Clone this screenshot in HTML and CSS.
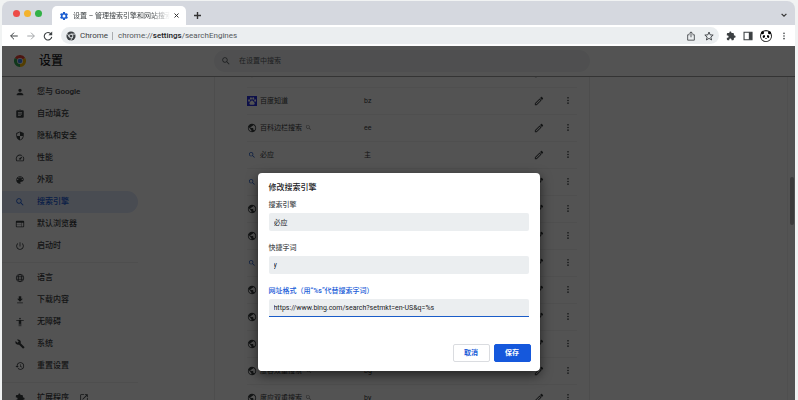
FILE: index.html
```html
<!DOCTYPE html>
<html lang="zh-CN">
<head>
<meta charset="utf-8">
<title>设置 - 管理搜索引擎和网站搜索</title>
<link rel="stylesheet" href="styles.css">
</head>
<body>
<svg class="sprite" aria-hidden="true">
  <symbol id="person" viewBox="0 0 24 24"><path d="M12 12c2.210 0 4-1.790 4-4s-1.790-4-4-4-4 1.790-4 4 1.790 4 4 4zm0 2c-2.670 0-8 1.340-8 4v2h16v-2c0-2.660-5.330-4-8-4z"/></symbol>
  <symbol id="assignment" viewBox="0 0 24 24"><path d="M19 3h-4.180C14.400 1.840 13.300 1 12 1s-2.400.84-2.820 2H5c-1.100 0-2 .9-2 2v14c0 1.100.9 2 2 2h14c1.100 0 2-.9 2-2V5c0-1.100-.9-2-2-2zm-7 0c.55 0 1 .45 1 1s-.45 1-1 1-1-.45-1-1 .45-1 1-1zm2 14H7v-2h7v2zm3-4H7v-2h10v2zm0-4H7V7h10v2z"/></symbol>
  <symbol id="shield" viewBox="0 0 24 24"><path d="M12 1L3 5v6c0 5.550 3.840 10.740 9 12 5.160-1.260 9-6.450 9-12V5l-9-4zm0 10.990h7c-.53 4.120-3.280 7.790-7 8.940V12H5V6.300l7-3.110v8.800z"/></symbol>
  <symbol id="speed" viewBox="0 0 24 24"><path d="M20.380 8.570l-1.230 1.850a8 8 0 0 1-.22 7.580H5.070A8 8 0 0 1 15.580 6.850l1.850-1.230A10 10 0 0 0 3.350 19a2 2 0 0 0 1.720 1h13.850a2 2 0 0 0 1.740-1 10 10 0 0 0-.27-10.440zm-9.790 6.840a2 2 0 0 0 2.830 0l5.660-8.490-8.490 5.660a2 2 0 0 0 0 2.830z"/></symbol>
  <symbol id="palette" viewBox="0 0 24 24"><path d="M12 3c-4.970 0-9 4.030-9 9s4.030 9 9 9c.83 0 1.500-.67 1.500-1.500 0-.39-.15-.74-.39-1.010-.23-.26-.38-.61-.38-.99 0-.83.67-1.500 1.500-1.500H16c2.760 0 5-2.240 5-5 0-4.420-4.030-8-9-8zm-5.500 9c-.83 0-1.500-.67-1.500-1.500S5.670 9 6.500 9 8 9.670 8 10.500 7.330 12 6.500 12zm3-4C8.670 8 8 7.330 8 6.500S8.670 5 9.500 5s1.500.67 1.500 1.500S10.330 8 9.500 8zm5 0c-.83 0-1.500-.67-1.500-1.500S13.670 5 14.500 5s1.500.67 1.500 1.500S15.330 8 14.500 8zm3 4c-.83 0-1.500-.67-1.500-1.500S16.670 9 17.500 9s1.500.67 1.500 1.500-.67 1.500-1.500 1.500z"/></symbol>
  <symbol id="search" viewBox="0 0 24 24"><path d="M15.500 14h-.79l-.28-.27C15.410 12.590 16 11.110 16 9.500 16 5.910 13.090 3 9.500 3S3 5.910 3 9.500 5.910 16 9.500 16c1.610 0 3.090-.59 4.230-1.570l.27.28v.79l5 4.990L20.490 19l-4.990-5zm-6 0C7.010 14 5 11.990 5 9.500S7.010 5 9.500 5 14 7.010 14 9.500 11.990 14 9.500 14z"/></symbol>
  <symbol id="browser" viewBox="0 0 24 24"><path d="M20 4H4c-1.100 0-2 .9-2 2v12c0 1.100.9 2 2 2h16c1.100 0 2-.9 2-2V6c0-1.100-.9-2-2-2zm-5 14H4v-4h11v4zm0-5H4V9h11v4zm5 5h-4V9h4v9z"/></symbol>
  <symbol id="power" viewBox="0 0 24 24"><path d="M13 3h-2v10h2V3zm4.830 2.170l-1.420 1.420C17.990 7.860 19 9.810 19 12c0 3.870-3.130 7-7 7s-7-3.130-7-7c0-2.190 1.010-4.140 2.580-5.420L6.170 5.170C4.230 6.820 3 9.260 3 12c0 4.970 4.030 9 9 9s9-4.030 9-9c0-2.740-1.230-5.180-3.170-6.830z"/></symbol>
  <symbol id="language" viewBox="0 0 24 24"><g fill="none" stroke="currentColor" stroke-width="2"><circle cx="12" cy="12" r="9"/><ellipse cx="12" cy="12" rx="4" ry="9"/><path d="M3.500 9h17M3.500 15h17"/></g></symbol>
  <symbol id="download" viewBox="0 0 24 24"><path d="M5 20h14v-2H5v2zM19 9h-4V3H9v6H5l7 7 7-7z"/></symbol>
  <symbol id="access" viewBox="0 0 24 24"><path d="M12 2c1.100 0 2 .9 2 2s-.9 2-2 2-2-.9-2-2 .9-2 2-2zm9 7h-6v13h-2v-6h-2v6H9V9H3V7h18v2z"/></symbol>
  <symbol id="build" viewBox="0 0 24 24"><path d="M22.700 19l-9.100-9.100c.9-2.300.4-5-1.500-6.900-2-2-5-2.400-7.400-1.300L9 6 6 9 1.600 4.700C.4 7.100.9 10.100 2.900 12.100c1.900 1.900 4.600 2.400 6.900 1.500l9.100 9.100c.4.4 1 .4 1.400 0l2.300-2.300c.5-.4.5-1.100.1-1.400z"/></symbol>
  <symbol id="restore" viewBox="0 0 24 24"><path d="M13 3c-4.970 0-9 4.030-9 9H1l3.890 3.890.07.14L9 12H6c0-3.870 3.130-7 7-7s7 3.130 7 7-3.130 7-7 7c-1.930 0-3.680-.79-4.940-2.060l-1.420 1.420C8.270 19.990 10.510 21 13 21c4.970 0 9-4.030 9-9s-4.030-9-9-9zm-1 5v5l4.280 2.540.72-1.210-3.500-2.080V8H12z"/></symbol>
  <symbol id="extension" viewBox="0 0 24 24"><path d="M20.500 11H19V7c0-1.100-.9-2-2-2h-4V3.500C13 2.120 11.880 1 10.500 1S8 2.120 8 3.500V5H4c-1.100 0-2 .9-2 2v3.800h1.500c1.490 0 2.700 1.210 2.700 2.700s-1.210 2.700-2.700 2.700H2V20c0 1.100.9 2 2 2h3.800v-1.500c0-1.490 1.210-2.700 2.700-2.700s2.700 1.210 2.700 2.700V22H17c1.100 0 2-.9 2-2v-4h1.500c1.380 0 2.500-1.120 2.500-2.500S21.880 11 20.500 11z"/></symbol>
  <symbol id="open" viewBox="0 0 24 24"><path d="M19 19H5V5h7V3H5a2 2 0 0 0-2 2v14a2 2 0 0 0 2 2h14c1.100 0 2-.9 2-2v-7h-2v7zM14 3v2h3.590l-9.830 9.830 1.410 1.410L19 6.410V10h2V3h-7z"/></symbol>
  <symbol id="globe" viewBox="0 0 24 24"><path d="M12 2C6.480 2 2 6.480 2 12s4.480 10 10 10 10-4.480 10-10S17.520 2 12 2zm-1 17.930c-3.950-.49-7-3.850-7-7.930 0-.62.08-1.210.21-1.790L9 15v1c0 1.100.9 2 2 2v1.930zm6.900-2.540c-.26-.81-1-1.390-1.900-1.390h-1v-3c0-.55-.45-1-1-1H8v-2h2c.55 0 1-.45 1-1V7h2c1.100 0 2-.9 2-2v-.41c2.930 1.190 5 4.060 5 7.410 0 2.080-.8 3.970-2.100 5.390z"/></symbol>
  <symbol id="pencil" viewBox="0 0 24 24"><path fill-rule="evenodd" d="M2 17.500V22h4.500L18 10.500 13.500 6zM4 18.300 13.500 8.800l1.700 1.700L5.700 20H4zM21.500 7c.6-.6.6-1.400 0-2L19 2.500c-.6-.6-1.400-.6-2 0L14.500 5 19 9.500z"/></symbol>
  <symbol id="more" viewBox="0 0 24 24"><circle cx="12" cy="4" r="2.400"/><circle cx="12" cy="12" r="2.400"/><circle cx="12" cy="20" r="2.400"/></symbol>
  <symbol id="gear" viewBox="0 0 24 24"><path d="M19.140 12.940c.04-.3.06-.61.06-.94 0-.32-.02-.64-.07-.94l2.030-1.580c.18-.14.23-.41.12-.61l-1.920-3.320c-.12-.22-.37-.29-.59-.22l-2.390.96c-.5-.38-1.030-.7-1.620-.94L14.400 2.810c-.04-.24-.24-.41-.48-.41h-3.840c-.24 0-.43.17-.47.41L9.250 5.350c-.59.24-1.130.57-1.620.94l-2.390-.96c-.22-.08-.47 0-.59.22L2.740 8.870c-.12.21-.08.47.12.61l2.030 1.580c-.05.3-.09.63-.09.94s.02.64.07.94l-2.030 1.580c-.18.14-.23.41-.12.61l1.920 3.320c.12.22.37.29.59.22l2.390-.96c.5.38 1.030.7 1.620.94l.36 2.540c.05.24.24.41.48.41h3.840c.24 0 .44-.17.47-.41l.36-2.540c.59-.24 1.130-.56 1.620-.94l2.390.96c.22.08.47 0 .59-.22l1.920-3.320c.12-.22.07-.47-.12-.61zM12 15.600a3.600 3.600 0 1 1 0-7.200 3.600 3.600 0 0 1 0 7.200z"/></symbol>
  <symbol id="arrow" viewBox="0 0 24 24"><path fill="none" stroke="currentColor" stroke-width="2.400" d="M21 12H4M12 4l-8 8 8 8"/></symbol>
  <symbol id="reload" viewBox="0 0 24 24"><path fill="none" stroke="currentColor" stroke-width="2.600" d="M19.500 7.500A9 9 0 1 0 21 14"/><path d="M22 1v9h-9z"/></symbol>
  <symbol id="chrome-mono" viewBox="0 0 24 24"><circle cx="12" cy="12" r="11"/><circle cx="12" cy="12" r="4.500" fill="none" stroke="#ebeef0" stroke-width="2"/><path d="M12 7.500h10M8 14.500 3 6M16 14.500 11 23" stroke="#ebeef0" stroke-width="2"/></symbol>
  <symbol id="share" viewBox="0 0 24 24"><path fill="none" stroke="currentColor" stroke-width="2" d="M8.500 9H4v13h16V9h-4.500M12 15V2.500M7.500 6.500 12 2l4.500 4.500"/></symbol>
  <symbol id="star" viewBox="0 0 24 24"><path fill="none" stroke="currentColor" stroke-width="2.200" d="m12 2.500 2.700 6.700 7.300.6-5.600 4.700 1.800 7-6.200-3.800-6.200 3.800 1.800-7L2 9.800l7.300-.6z"/></symbol>
  <symbol id="panel" viewBox="0 0 24 24"><path fill="none" stroke="currentColor" stroke-width="2.600" d="M2.500 3h19v18h-19z"/><path d="M14 3h8v18h-8z"/></symbol>
</svg>

<div class="window">
  <header class="tabstrip">
    <div class="lights"><i class="light red"></i><i class="light amber"></i><i class="light green"></i></div>
    <div class="tab">
      <svg class="icon tab-icon"><use href="#gear"/></svg>
      <span class="tab-title">设置 – 管理搜索引擎和网站搜索</span>
      <button class="plain" aria-label="关闭标签页"><svg class="close" viewBox="0 0 10 10"><path d="m1 1 8 8M9 1 1 9"/></svg></button>
    </div>
    <button class="plain new-tab" aria-label="新标签页"><svg class="plus" viewBox="0 0 10 10"><path d="M5 0v10M0 5h10"/></svg></button>
    <button class="plain tab-menu" aria-label="搜索标签页"><svg class="chevron" viewBox="0 0 10 10"><path d="m1 3 4 4 4-4"/></svg></button>
  </header>

  <div class="toolbar">
    <button class="plain" aria-label="后退"><svg class="icon"><use href="#arrow"/></svg></button>
    <button class="plain forward" aria-label="前进"><svg class="icon"><use href="#arrow"/></svg></button>
    <button class="plain" aria-label="重新加载"><svg class="icon"><use href="#reload"/></svg></button>
    <div class="omnibox">
      <svg class="icon"><use href="#chrome-mono"/></svg>
      <span class="origin">Chrome</span>
      <span class="address">chrome://<b>settings</b>/searchEngines</span>
      <button class="plain share" aria-label="分享"><svg class="icon"><use href="#share"/></svg></button>
      <button class="plain" aria-label="收藏"><svg class="icon"><use href="#star"/></svg></button>
    </div>
    <button class="plain" aria-label="扩展程序"><svg class="icon"><use href="#extension"/></svg></button>
    <button class="plain" aria-label="侧边栏"><svg class="icon"><use href="#panel"/></svg></button>
    <button class="plain" aria-label="个人资料"><svg class="avatar" viewBox="0 0 24 24"><circle cx="12" cy="12" r="12" fill="#222"/><circle cx="12" cy="12.500" r="10" fill="#fff"/><circle cx="5" cy="5.500" r="3"/><circle cx="19" cy="5.500" r="3"/><ellipse cx="7.800" cy="13" rx="2.200" ry="2.800" transform="rotate(30 7.800 13)"/><ellipse cx="16.200" cy="13" rx="2.200" ry="2.800" transform="rotate(-30 16.200 13)"/><ellipse cx="12" cy="17" rx="1.600" ry="1"/></svg></button>
    <button class="plain" aria-label="更多"><svg class="icon menu-dots"><use href="#more"/></svg></button>
  </div>

  <div class="page">
    <div class="page-header">
      <svg class="logo" viewBox="0 0 24 24"><path fill="#ea4335" d="M12 12 1.600 6A12 12 0 0 1 22.400 6z"/><path fill="#fbbc05" d="M12 12l10.400-6A12 12 0 0 1 12 24z"/><path fill="#34a853" d="M12 12v12A12 12 0 0 1 1.600 6z"/><circle cx="12" cy="12" r="6" fill="#fff"/><circle cx="12" cy="12" r="4.600" fill="#4285f4"/></svg>
      <h1>设置</h1>
      <label class="page-search"><svg class="icon"><use href="#search"/></svg><input type="search" placeholder="在设置中搜索" aria-label="在设置中搜索"></label>
    </div>

    <div class="columns">
      <nav class="menu">
        <a href="#"><svg class="icon"><use href="#person"/></svg>您与 Google</a>
        <a href="#"><svg class="icon"><use href="#assignment"/></svg>自动填充</a>
        <a href="#"><svg class="icon"><use href="#shield"/></svg>隐私和安全</a>
        <a href="#"><svg class="icon"><use href="#speed"/></svg>性能</a>
        <a href="#"><svg class="icon"><use href="#palette"/></svg>外观</a>
        <a href="#" class="selected"><svg class="icon"><use href="#search"/></svg>搜索引擎</a>
        <a href="#"><svg class="icon"><use href="#browser"/></svg>默认浏览器</a>
        <a href="#"><svg class="icon"><use href="#power"/></svg>启动时</a>
        <hr>
        <a href="#"><svg class="icon"><use href="#language"/></svg>语言</a>
        <a href="#"><svg class="icon"><use href="#download"/></svg>下载内容</a>
        <a href="#"><svg class="icon"><use href="#access"/></svg>无障碍</a>
        <a href="#"><svg class="icon"><use href="#build"/></svg>系统</a>
        <a href="#"><svg class="icon"><use href="#restore"/></svg>重置设置</a>
        <hr>
        <a href="#"><svg class="icon"><use href="#extension"/></svg>扩展程序<svg class="icon external"><use href="#open"/></svg></a>
      </nav>
      <main class="card">
        <table class="engines"><tbody id="engines"></tbody></table>
      </main>
      <div class="scrollbar"><div class="thumb"></div></div>
    </div>

    <div class="backdrop">
      <form class="dialog" role="dialog" aria-labelledby="dialog-title">
        <h2 id="dialog-title">修改搜索引擎</h2>
        <div class="field"><label for="name">搜索引擎</label><input id="name" type="text" value="必应"></div>
        <div class="field"><label for="keyword">快捷字词</label><input id="keyword" type="text" value="y"></div>
        <div class="field active"><label for="url">网址格式（用“%s”代替搜索字词）</label><input id="url" type="text" value="https://www.bing.com/search?setmkt=en-US&amp;q=%s"></div>
        <div class="actions"><button type="button" class="button">取消</button><button type="button" class="button primary">保存</button></div>
      </form>
    </div>
  </div>
</div>
<script src="script.js"></script>
</body>
</html>
```

FILE: script.js
```js
const engines = [
  ["globe", "", ""],
  ["baidu", "百度知道", "bz"],
  ["globe", "百科边栏搜索", "ee", true],
  ["search", "必应", "主"],
  ["search", "", ""],
  ["globe", "", ""],
  ["globe", "", ""],
  ["search", "", ""],
  ["globe", "", ""],
  ["globe", "", ""],
  ["globe", "", ""],
  ["globe", "度谷双重搜索", "bg", true],
  ["globe", "度应双重搜索", "by", true]
];

const use = (id, cls = "") => `<svg class="icon ${cls}"><use href="#${id}"/></svg>`;
const baidu = `<svg class="icon baidu" viewBox="0 0 24 24"><path fill="#2932e1" d="M0 0h24v24H0z"/><g fill="#fff"><ellipse cx="5" cy="11" rx="2.200" ry="3"/><ellipse cx="9.500" cy="6" rx="2.200" ry="3"/><ellipse cx="15" cy="6" rx="2.200" ry="3"/><ellipse cx="19.500" cy="11" rx="2.200" ry="3"/><path d="M12 10.500c3 0 3.500 3 5.500 5s1 5.500-2 5.500-5 0-7 0-4-3-2-5.500 2.500-5 5.500-5z"/></g></svg>`;

document.getElementById("engines").innerHTML = engines.map(([icon, name, key, lens]) => `
  <tr>
    <td class="col-icon">${icon === "baidu" ? baidu : use(icon, icon)}</td>
    <td class="col-name">${name}${lens ? use("search", "lens") : ""}</td>
    <td class="col-key">${key}</td>
    <td class="col-edit"><button class="plain" aria-label="修改">${use("pencil")}</button></td>
    <td class="col-more"><button class="plain" aria-label="更多操作">${use("more")}</button></td>
  </tr>`).join("");
```

FILE: styles.css
```css
* { box-sizing: border-box; }

html, body { height: 100%; }

body {
  margin: 0;
  padding: 1px 3px 0 2px;
  overflow: hidden;
  background: #f1f3f3;
  color: #3c4043;
  font: 7px/12px Roboto, "Noto Sans CJK SC", sans-serif;
}

.sprite { position: absolute; width: 0; height: 0; }
.icon { width: 10px; height: 10px; flex: none; fill: currentColor; }

.plain {
  display: flex;
  padding: 0;
  border: 0;
  background: none;
  color: inherit;
}

.window {
  display: flex;
  flex-direction: column;
  height: 100%;
  border-radius: 8px 8px 0 0;
  overflow: hidden;
}

/* Tab strip */
.tabstrip {
  display: flex;
  align-items: center;
  flex: none;
  height: 24px;
  background: #d5d8df;
}
.lights { display: flex; gap: 4px; padding-left: 11px; }
.light { width: 7px; height: 7px; border-radius: 50%; }
.red { background: #ed4c48; }
.amber { background: #f3b32d; }
.green { background: #32b146; }
.tab {
  display: flex;
  align-items: center;
  gap: 4px;
  align-self: flex-end;
  width: 134px;
  height: 19px;
  margin-left: 10px;
  padding: 0 7px 0 7px;
  border-radius: 5px 5px 0 0;
  background: #fff;
}
.tab-icon { color: #1a5cd0; }
.tab-title {
  flex: 1;
  overflow: hidden;
  white-space: nowrap;
  mask-image: linear-gradient(to right, #000 80%, transparent);
}
.close, .plus, .chevron { fill: none; stroke: #333; stroke-width: 2; }
.close { width: 5px; height: 5px; }
.plus { width: 7px; height: 7px; }
.chevron { width: 6px; height: 6px; }
.new-tab { margin-left: 8px; padding-top: 4px; }
.tab-menu { margin-left: auto; padding: 4px 8px 0 0; }

/* Toolbar */
.toolbar {
  display: flex;
  align-items: center;
  gap: 7px;
  flex: none;
  height: 21px;
  padding: 0 6px 0 7px;
  background: #fff;
}
.forward { color: #a3a6a9; transform: scaleX(-1); }
.omnibox {
  display: flex;
  align-items: center;
  flex: 1;
  height: 17px;
  margin-left: 1px;
  padding: 0 5px;
  border-radius: 9px;
  background: #ebeef0;
  font-size: 8px;
}
.origin { margin-left: 4px; padding-right: 4px; border-right: 1px solid #aaadb0; line-height: 8px; }
.address { margin-left: 5px; color: #54585c; }
.address b { color: #202124; font-weight: 500; }
.share { margin: 0 8px 0 auto; }
.avatar { width: 12px; height: 12px; }
.menu-dots { height: 8px; }

/* Settings page */
.page {
  position: relative;
  display: flex;
  flex-direction: column;
  flex: 1;
  min-height: 0;
  background: #fff;
}
.page-header {
  display: flex;
  align-items: center;
  flex: none;
  height: 31px;
  padding-left: 12px;
  border-bottom: 1px solid #a0a0a0;
}
.logo { width: 12px; height: 12px; }
.page-header h1 {
  flex: none;
  width: 188px;
  margin: 0;
  padding-left: 13px;
  font-size: 12px;
  font-weight: 500;
  color: #202124;
}
.page-search {
  display: flex;
  align-items: center;
  gap: 8px;
  width: 376px;
  height: 22px;
  padding-left: 7px;
  border-radius: 11px;
  background: #f1f3f4;
  color: #5f6368;
}
.page-search input {
  flex: 1;
  padding: 0;
  border: 0;
  background: none;
  font: inherit;
}
.page-search input::placeholder { color: #5f6368; opacity: 1; }

.columns { display: flex; flex: 1; min-height: 0; overflow: hidden; }
.menu { flex: none; width: 212px; padding-top: 4px; font-size: 8px; font-weight: 500; }
.menu a {
  display: flex;
  align-items: center;
  gap: 12px;
  width: 136px;
  height: 22px;
  padding-left: 13px;
  border-radius: 0 11px 11px 0;
  color: inherit;
  text-decoration: none;
}
.menu a.selected { background: #e0e8fb; color: #1a5cd8; }
.menu hr { width: 136px; height: 1px; margin: 5px 0 4px; border: 0; background: #f0f0f0; }
.external { margin-left: -2px; }

.card {
  flex: none;
  width: 376px;
  padding: 0 12px 0 32px;
  border: solid #ececec;
  border-width: 0 1px;
  overflow: hidden;
}
.engines {
  width: 100%;
  margin-top: -17px;
  border-collapse: collapse;
  table-layout: fixed;
}
.engines td { height: 27px; padding: 0; border-bottom: 1px solid #f2f2f2; vertical-align: middle; }
.col-icon { width: 13px; }
.col-icon .icon { display: block; }
.col-icon .search { width: 8px; height: 8px; margin-left: 1px; color: #1a56c4; }
.col-name { width: 104px; }
.lens { width: 7px; height: 7px; margin-left: 3px; vertical-align: middle; color: #777; }
.col-edit { width: 30px; }
.col-more { width: 13px; }
.col-more .icon { width: 8px; height: 9px; }

.scrollbar { width: 8px; margin-left: auto; padding: 100px 1px 0 2px; border-left: 1px solid #f2f2f2; }
.thumb { height: 48px; border-radius: 3px; background: #b8b8b8; }

/* Dialog */
.backdrop {
  position: absolute;
  inset: 0;
  display: flex;
  justify-content: center;
  align-items: flex-start;
  padding-top: 127px;
  background: rgba(0, 0, 0, .675);
}
.dialog {
  width: 282px;
  padding: 9px 9px 9px 11px;
  border-radius: 4px;
  background: #fff;
  box-shadow: 0 4px 12px rgba(0, 0, 0, .6);
}
.dialog h2 { margin: 0 0 4px; font-size: 8px; line-height: 12px; font-weight: 500; color: #202124; }
.field { height: 43px; padding-right: 2px; }
.field label { display: block; height: 15px; line-height: 14px; font-weight: 500; color: #4a4d51; }
.field input {
  display: block;
  width: 100%;
  height: 18px;
  padding: 0 5px;
  border: 0;
  border-radius: 2px;
  background: #ebeef0;
  font: inherit;
  color: #202124;
}
.field.active label { color: #1a5cd8; }
.field.active input { border-bottom: 1px solid #1a5cc8; border-radius: 2px 2px 0 0; }
.actions { display: flex; justify-content: flex-end; gap: 4px; margin-top: 17px; }
.button {
  width: 37px;
  height: 18px;
  padding: 0;
  border: 1px solid #dadce0;
  border-radius: 2px;
  background: #fff;
  color: #1a5cd8;
  font: inherit;
  font-weight: 700;
}
.button.primary { border-color: #1558dc; background: #1558dc; color: #fff; }
```
